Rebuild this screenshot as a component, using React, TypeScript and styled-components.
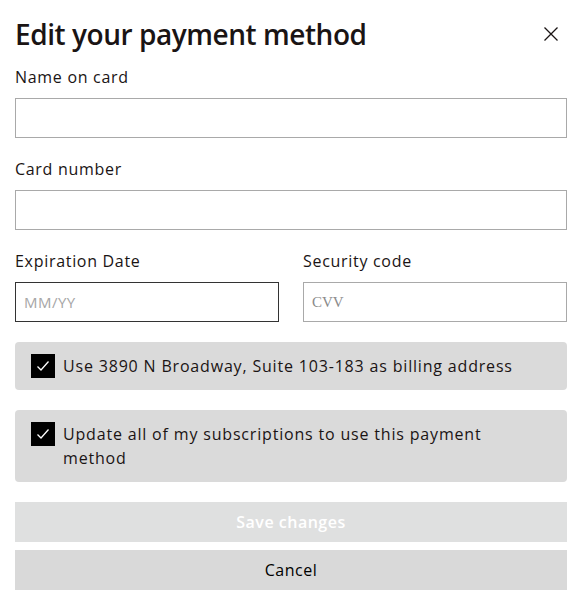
import React, { useState } from 'react';
import styled, { createGlobalStyle } from 'styled-components';

const colors = {
    text: '#1a1414',
    border: '#a9a9a9',
    borderDark: '#333333',
    panel: '#dadada',
    disabled: '#dfe0e0',
    cancel: '#d9d9d9',
    placeholder: '#a6a6a6',
};

const GlobalStyle = createGlobalStyle`
    body {
        margin: 0;
        background: #ffffff;
        font-family: 'Open Sans', 'Noto Sans', sans-serif;
        color: ${colors.text};
    }
`;

const Page = styled.div`
    width: 585px;
    padding: 14px 18px 14px 15px;
    box-sizing: border-box;
`;

const Header = styled.div`
    display: flex;
    align-items: center;
    justify-content: space-between;
    height: 40px;
    margin-bottom: 12px;
`;

const Title = styled.h1`
    margin: 0;
    font-size: 28px;
    font-weight: 600;
    letter-spacing: -0.45px;
    color: ${colors.text};
`;

const CloseButton = styled.button`
    display: flex;
    align-items: center;
    justify-content: center;
    width: 24px;
    height: 24px;
    padding: 0;
    margin-right: 4px;
    border: 0;
    background: none;
    cursor: pointer;
`;

const Form = styled.div`
    display: flex;
    flex-direction: column;
    gap: 20px;
`;

const Row = styled.div`
    display: grid;
    grid-template-columns: 1fr 1fr;
    gap: 24px;
`;

const Field = styled.label`
    display: flex;
    flex-direction: column;
    gap: 8px;
`;

const Label = styled.span`
    font-size: 16px;
    line-height: 23px;
    padding-bottom: 1px;
    letter-spacing: 0.7px;
    color: ${colors.text};
`;

const Input = styled.input<{ $focused?: boolean; $serif?: boolean }>`
    height: 40px;
    box-sizing: border-box;
    border: 1px solid ${(p) => (p.$focused ? colors.borderDark : colors.border)};
    border-radius: 0;
    padding: 0 8px;
    font-family: ${(p) => (p.$serif ? "'Liberation Serif', serif" : "'Open Sans', sans-serif")};
    font-size: 15px;
    letter-spacing: ${(p) => (p.$serif ? '0' : '0.5px')};
    color: ${colors.text};
    background: #fff;
    outline: none;
    &::placeholder {
        color: ${(p) => (p.$serif ? '#8a8a8a' : colors.placeholder)};
    }
`;

const CheckPanel = styled.label`
    display: flex;
    align-items: flex-start;
    gap: 8px;
    padding: 12px 16px;
    background: ${colors.panel};
    border-radius: 4px;
    cursor: pointer;
`;

const Box = styled.span`
    flex: none;
    display: flex;
    align-items: center;
    justify-content: center;
    width: 24px;
    height: 24px;
    background: #000;
`;

const CheckText = styled.span`
    font-size: 16px;
    line-height: 24px;
    letter-spacing: 0.82px;
    padding-right: 24px;
`;

const Actions = styled.div`
    display: flex;
    flex-direction: column;
    gap: 8px;
`;

const Button = styled.button<{ $variant: 'primary' | 'secondary' }>`
    height: 40px;
    border: 0;
    border-radius: 0;
    font-family: 'Open Sans', sans-serif;
    font-size: 16px;
    letter-spacing: 0.5px;
    font-weight: ${(p) => (p.$variant === 'primary' ? 600 : 400)};
    background: ${(p) => (p.$variant === 'primary' ? colors.disabled : colors.cancel)};
    color: ${(p) => (p.$variant === 'primary' ? '#ffffff' : '#000000')};
    cursor: ${(p) => (p.$variant === 'primary' ? 'default' : 'pointer')};
`;

const CloseIcon = () => (
    <svg width="14" height="14" viewBox="0 0 14 14" fill="none">
        <path d="M0.5 0.5 L13.5 13.5 M13.5 0.5 L0.5 13.5" stroke="#1a1414" strokeWidth="1.3" />
    </svg>
);

const CheckIcon = () => (
    <svg width="16" height="16" viewBox="0 0 16 16" fill="none">
        <path d="M2.5 8.5 L6 12 L13.5 3.5" stroke="#ffffff" strokeWidth="1.3" />
    </svg>
);

const Checkbox: React.FC<{ children: React.ReactNode }> = ({ children }) => {
    const [checked, setChecked] = useState(true);
    return (
        <CheckPanel onClick={() => setChecked(!checked)}>
            <Box>{checked && <CheckIcon />}</Box>
            <CheckText>{children}</CheckText>
        </CheckPanel>
    );
};

export default function App() {
    return (
        <>
            <GlobalStyle />
            <Page>
                <Header>
                    <Title>Edit your payment method</Title>
                    <CloseButton aria-label="Close">
                        <CloseIcon />
                    </CloseButton>
                </Header>
                <Form>
                    <Field>
                        <Label>Name on card</Label>
                        <Input />
                    </Field>
                    <Field>
                        <Label>Card number</Label>
                        <Input />
                    </Field>
                    <Row>
                        <Field>
                            <Label>Expiration Date</Label>
                            <Input $focused placeholder="MM/YY" />
                        </Field>
                        <Field>
                            <Label>Security code</Label>
                            <Input $serif placeholder="CVV" />
                        </Field>
                    </Row>
                    <Checkbox>Use 3890 N Broadway, Suite 103-183 as billing address</Checkbox>
                    <Checkbox>Update all of my subscriptions to use this payment method</Checkbox>
                    <Actions>
                        <Button $variant="primary" disabled>
                            Save changes
                        </Button>
                        <Button $variant="secondary">Cancel</Button>
                    </Actions>
                </Form>
            </Page>
        </>
    );
}
